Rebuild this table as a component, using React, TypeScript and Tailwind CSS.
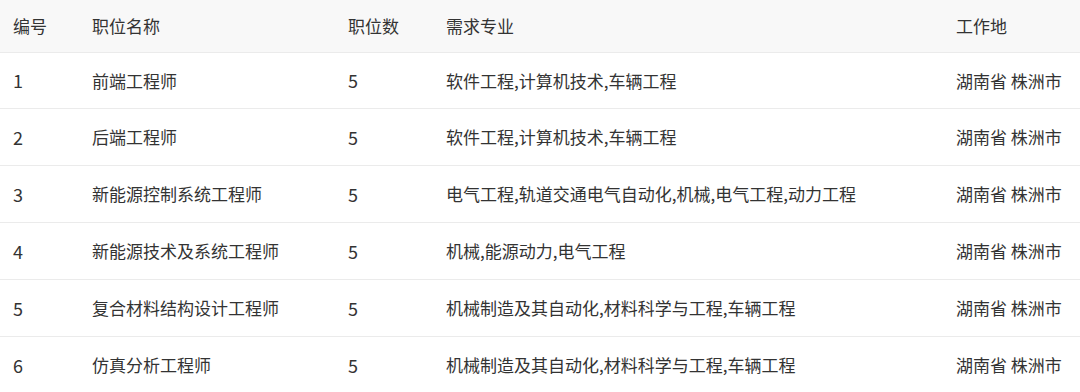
const rows = [
  { id: 1, name: "前端工程师", count: 5, major: "软件工程,计算机技术,车辆工程", place: "湖南省 株洲市" },
  { id: 2, name: "后端工程师", count: 5, major: "软件工程,计算机技术,车辆工程", place: "湖南省 株洲市" },
  { id: 3, name: "新能源控制系统工程师", count: 5, major: "电气工程,轨道交通电气自动化,机械,电气工程,动力工程", place: "湖南省 株洲市" },
  { id: 4, name: "新能源技术及系统工程师", count: 5, major: "机械,能源动力,电气工程", place: "湖南省 株洲市" },
  { id: 5, name: "复合材料结构设计工程师", count: 5, major: "机械制造及其自动化,材料科学与工程,车辆工程", place: "湖南省 株洲市" },
  { id: 6, name: "仿真分析工程师", count: 5, major: "机械制造及其自动化,材料科学与工程,车辆工程", place: "湖南省 株洲市" },
];

const cols = "grid grid-cols-[79px_256px_98px_510px_1fr] items-center px-[13px]";

export default function App() {
  return (
    <div
      className="w-[1080px] h-[392px] overflow-hidden bg-white text-[17px] text-[#333333]"
      style={{ fontFamily: '"Noto Sans CJK SC", "Noto Sans", sans-serif' }}
    >
      <div className={`${cols} h-[53px] bg-[#f8f8f8] border-b border-[#ebebeb]`}>
        <div>编号</div>
        <div>职位名称</div>
        <div>职位数</div>
        <div>需求专业</div>
        <div>工作地</div>
      </div>
      {rows.map((r, i) => (
        <div
          key={r.id}
          className={`${cols} ${i === 0 ? "h-[56px]" : "h-[57px]"} border-b border-[#ebebeb]`}
        >
          <div className="text-[18px]">{r.id}</div>
          <div>{r.name}</div>
          <div className="text-[18px]">{r.count}</div>
          <div className="whitespace-nowrap">{r.major}</div>
          <div className="whitespace-nowrap">{r.place}</div>
        </div>
      ))}
    </div>
  );
}
